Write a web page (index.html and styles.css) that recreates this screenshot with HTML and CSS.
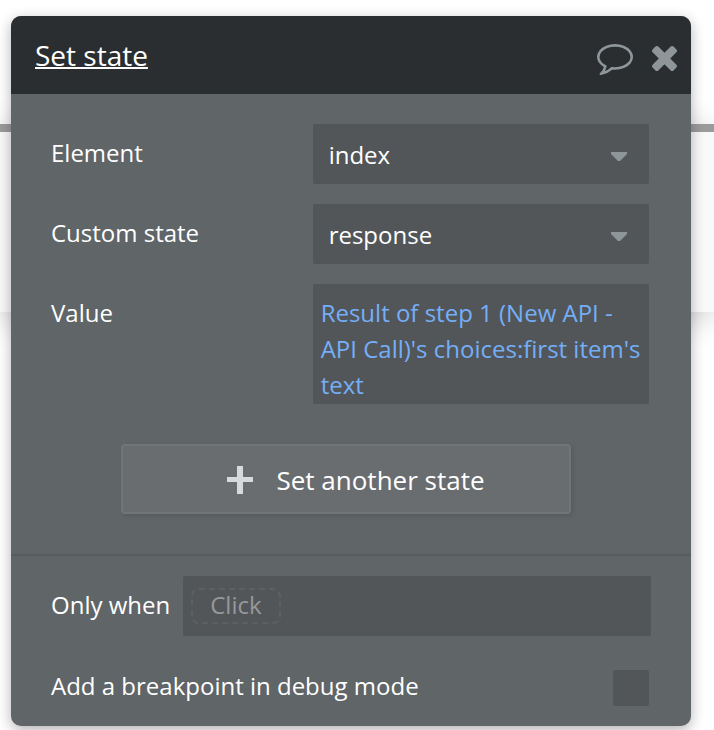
FILE: index.html
```html
<!DOCTYPE html>
<html lang="en">
<head>
<meta charset="utf-8">
<meta name="viewport" content="width=device-width, initial-scale=1">
<title>Set state</title>
<link rel="stylesheet" href="styles.css">
</head>
<body>
<div class="stage">
  <div class="canvas"><div class="canvas-page"></div></div>
  <main class="panel">
    <header class="panel-header">
      <h1 class="title">Set state</h1>
      <button class="icon-button" type="button" aria-label="Comment">
        <svg class="icon-comment" viewBox="0 256 1792 1536" aria-hidden="true"><path d="M896 384q-204 0-381.500 69.500t-282 187.500-104.500 255q0 112 71.500 213.500t201.500 175.500l87 50-27 96q-24 91-70 172 152-63 275-171l43-38 57 6q69 8 130 8 204 0 381.500-69.500t282-187.500 104.500-255-104.500-255-282-187.500-381.500-69.500zm896 512q0 174-120 321.500t-326 233-450 85.500q-70 0-145-8-198 175-460 242-49 14-114 22h-5q-15 0-27-10.500t-16-27.500v-1q-3-4-.5-12t2-10 4.500-9.500l6-9 7-8.500 8-9q7-8 31-34.500t34.500-38 31-39.500 32.500-51 27-59 26-76q-157-89-247.500-220t-90.500-281q0-174 120-321.500t326-233 450-85.500 450 85.500 326 233 120 321.500z"/></svg>
      </button>
      <button class="icon-button" type="button" aria-label="Close">
        <svg class="icon-close" viewBox="302 366 1188 1188" aria-hidden="true"><path d="M1490 1322q0 40-28 68l-136 136q-28 28-68 28t-68-28l-294-294-294 294q-28 28-68 28t-68-28l-136-136q-28-28-28-68t28-68l294-294-294-294q-28-28-28-68t28-68l136-136q28-28 68-28t68 28l294 294 294-294q28-28 68-28t68 28l136 136q28 28 28 68t-28 68l-294 294 294 294q28 28 28 68z"/></svg>
      </button>
    </header>
    <form>
      <section class="fields">
        <div class="row">
          <label class="label" for="element">Element</label>
          <div class="select">
            <select class="control" id="element"><option>index</option></select>
            <svg class="caret" viewBox="0 0 16 9" aria-hidden="true"><path d="M0 0h16v2L9 9H7L0 2z"/></svg>
          </div>
        </div>
        <div class="row">
          <label class="label" for="state">Custom state</label>
          <div class="select">
            <select class="control" id="state"><option>response</option></select>
            <svg class="caret" viewBox="0 0 16 9" aria-hidden="true"><path d="M0 0h16v2L9 9H7L0 2z"/></svg>
          </div>
        </div>
        <div class="row">
          <label class="label" for="value">Value</label>
          <textarea class="expression" id="value" rows="3" spellcheck="false">Result of step 1 (New API - API Call)'s choices:first item's text</textarea>
        </div>
        <button class="add-button" type="button">
          <svg class="icon-plus" viewBox="0 0 26 28" aria-hidden="true"><path d="M10 0h6v11h10v5H16v12h-6V16H0v-5h10z"/></svg>
          Set another state
        </button>
      </section>
      <section class="conditions">
        <div class="condition-row">
          <label class="label" for="condition">Only when</label>
          <div class="composer"><button class="chip" id="condition" type="button">Click</button></div>
        </div>
        <div class="check-row">
          <label class="label" for="breakpoint">Add a breakpoint in debug mode</label>
          <input class="checkbox" id="breakpoint" type="checkbox">
        </div>
      </section>
    </form>
  </main>
</div>
</body>
</html>
```
FILE: styles.css
```css
* {
  box-sizing: border-box;
}

body {
  margin: 0;
  background: #fff;
  color: #fff;
  font: 24px/36px "Open Sans", sans-serif;
}

button,
select,
textarea,
input {
  margin: 0;
  border: 0;
  font: inherit;
}

/* The page canvas and the panel share one cell, panel on top. */
.stage {
  display: grid;
  overflow: hidden;
}

.canvas,
.panel {
  grid-area: 1 / 1;
}

.canvas {
  padding-top: 124px;
}

.canvas-page {
  height: 188px;
  border-top: 8px solid #9b9b9b;
  background: #f9f9f9;
  box-shadow: 0 6px 30px rgba(0, 0, 0, 0.2);
}

.panel {
  position: relative;
  margin: 16px 23px 4px 11px;
  border-radius: 10px;
  background: #606568;
  box-shadow: 0 4px 14px rgba(0, 0, 0, 0.3);
}

.panel-header {
  display: flex;
  align-items: center;
  gap: 19px;
  height: 78px;
  padding: 0 14px 0 24px;
  border-radius: 10px 10px 0 0;
  background: #2a2e31;
}

.title {
  flex: 1;
  margin: 0;
  font-size: 28px;
  font-weight: 400;
  line-height: 40px;
  text-decoration: underline;
  text-decoration-thickness: 2px;
  text-decoration-skip-ink: none;
}

.icon-button {
  display: flex;
  padding: 8px 0 0;
  background: none;
  fill: #8f9699;
  cursor: pointer;
}

.icon-button + .icon-button {
  padding-top: 6px;
}

.icon-comment {
  width: 36px;
  height: 31px;
}

.icon-close {
  width: 25px;
  height: 25px;
}

.fields {
  display: flex;
  flex-direction: column;
  gap: 20px;
  padding: 30px 42px 40px 40px;
}

.row {
  display: grid;
  grid-template-columns: 7fr 9fr;
  align-items: start;
}

.row .label {
  padding-top: 11px;
}

.select {
  display: grid;
  align-items: center;
}

.select > * {
  grid-area: 1 / 1;
}

.control {
  width: 100%;
  height: 60px;
  padding: 2px 48px 0 16px;
  border-radius: 2px;
  appearance: none;
  background: #525659;
  color: #fff;
}

.caret {
  justify-self: end;
  width: 16px;
  height: 9px;
  margin: 4px 22px 0 0;
  fill: #8f9699;
  pointer-events: none;
}

.expression {
  display: block;
  width: 100%;
  height: 120px;
  padding: 11px 4px 0 8px;
  border-radius: 2px;
  overflow: hidden;
  resize: none;
  background: #525659;
  color: #75aef7;
}

.add-button {
  display: flex;
  align-items: center;
  justify-content: center;
  gap: 23px;
  height: 70px;
  margin: 20px 78px 0 70px;
  padding: 2px 0 0 20px;
  border: 2px solid #717578;
  border-radius: 4px;
  background: #696d70;
  box-shadow: 2px 2px 4px rgba(0, 0, 0, 0.1);
  color: #fff;
  font-size: 26px;
  cursor: pointer;
}

.icon-plus {
  width: 26px;
  height: 28px;
  fill: #d8d9da;
}

.conditions {
  display: flex;
  flex-direction: column;
  gap: 34px;
  padding: 20px 40px;
  border-top: 2px solid #575c5f;
}

.condition-row,
.check-row {
  display: flex;
  align-items: center;
}

.conditions .label {
  padding-bottom: 2px;
}

.condition-row {
  gap: 13px;
}

.composer {
  display: flex;
  align-items: center;
  flex: 1;
  height: 60px;
  padding: 0 8px;
  border-radius: 2px;
  background: #525659;
}

.chip {
  height: 36px;
  padding: 0 17px 2px;
  border: 2px dashed #5c6063;
  border-radius: 8px;
  background: none;
  color: #979899;
  line-height: 30px;
}

.check-row {
  align-items: start;
  justify-content: space-between;
  height: 36px;
  padding-right: 2px;
}

.check-row .label {
  line-height: 32px;
}

.checkbox {
  width: 36px;
  height: 36px;
  border-radius: 2px;
  appearance: none;
  background: #525659;
}
```
